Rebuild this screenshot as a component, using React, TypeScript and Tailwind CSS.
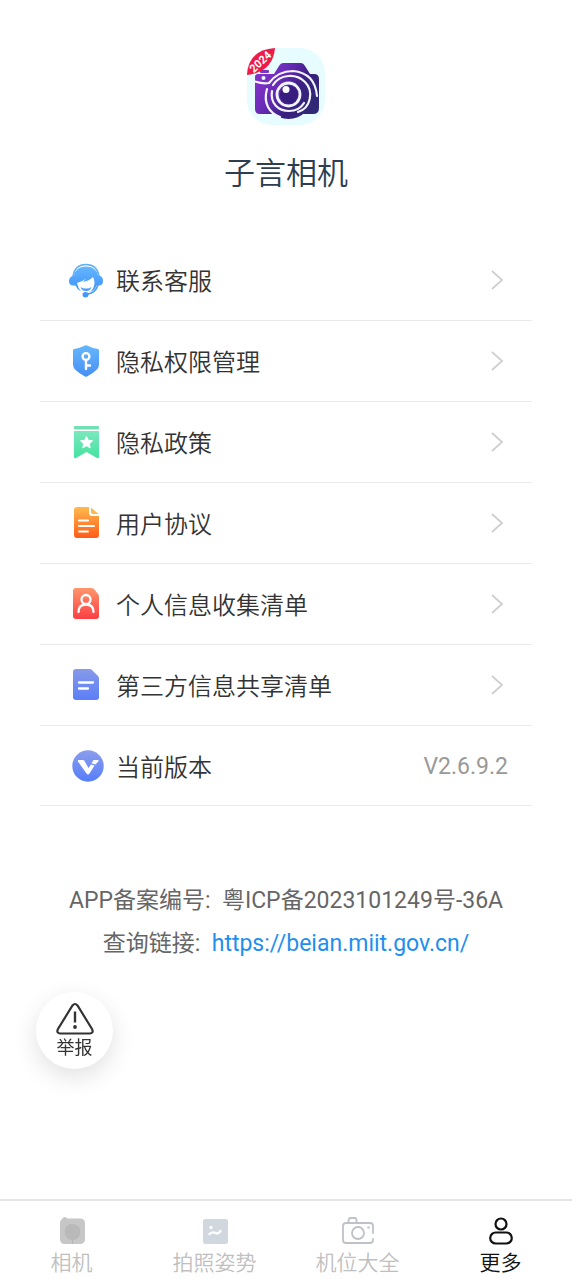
import type { ReactNode } from "react";

function AppLogo() {
  return (
    <svg viewBox="0 0 80 80" className="size-20" role="img" aria-label="子言相机">
      <defs>
        <linearGradient id="logo-body" gradientUnits="userSpaceOnUse" x1="9" y1="24" x2="72" y2="62">
          <stop offset="0" stopColor="#8a35cc" />
          <stop offset="0.35" stopColor="#6a2bb8" />
          <stop offset="0.65" stopColor="#3a2080" />
          <stop offset="1" stopColor="#2f2a72" />
        </linearGradient>
      </defs>
      <rect x="1" y="2" width="78" height="77" rx="25" fill="#e6fcfe" />
      <path d="M12 28h16l5-8q1.500-3 4-3h18q2.500 0 4 3l5 8h4q5 0 5 5v29q0 6-6 6H14q-5 0-5-5V31q0-3 3-3z" fill="url(#logo-body)" />
      <rect x="14" y="24" width="9" height="3" rx="1" fill="#7a35c4" />
      <circle cx="17.500" cy="32" r="2" fill="#e6fcfe" />
      <circle cx="42.500" cy="49" r="24" fill="url(#logo-body)" />
      <g fill="none" stroke="#f1f5ff" strokeLinecap="round">
        <path d="M9 35.500q8 2.500 14 1.500Q32 25 47 25 69 27 71 50" strokeWidth="2.200" />
        <path d="M21 43C17 57 23 67 34 71" strokeWidth="2.200" />
        <path d="M27 39C34 28 50 27 59 36S65 62 52 66" strokeWidth="2.200" />
        <path d="M26 45C24 57 32 65 43 65 50 65 55 62 58 57" strokeWidth="2.200" />
        <circle cx="42.500" cy="48.500" r="11.500" strokeWidth="2.800" />
      </g>
      <circle cx="42.500" cy="48.500" r="8.500" fill="#361d80" />
      <circle cx="40" cy="43.500" r="3.500" fill="#fff" />
      <path d="M1 29Q2 4 29 2Q27 26 1 29z" fill="#f01a48" />
      <text x="14.500" y="19.500" textAnchor="middle" fontSize="11" fontWeight="700" fontFamily="Roboto, sans-serif" fill="#fff" transform="rotate(-43 14.500 16)">2024</text>
    </svg>
  );
}

function ServiceIcon() {
  return (
    <svg viewBox="0 0 36 36" className="size-9" aria-hidden="true">
      <defs>
        <linearGradient id="service" x1="0" y1="0" x2="0" y2="1">
          <stop offset="0" stopColor="#64b6ff" />
          <stop offset="1" stopColor="#3f92f8" />
        </linearGradient>
      </defs>
      <path d="M5 14Q7 2.500 18 2.500T31 14" fill="none" stroke="#60aefb" strokeWidth="1.400" />
      <path d="M18 4.500Q28 4.500 30 13.500q5 0 5 5.500 0 4.500-4.500 4.500h-2Q27 28 22 30q4.500-4 4.500-9 0-3-1.500-6-4 4-10 5l3-3.500q-4 3.500-9 4.500 1 5 4 8.500-4-2-5.500-6H5.500Q1 23.500 1 19T6 13.500Q8 4.500 18 4.500z" fill="url(#service)" />
      <path d="M12.500 25q5.500 3 11 0-1 4-5.500 4t-5.500-4z" fill="url(#service)" />
      <path d="M30 23q-2.500 8.500-12 9.500" fill="none" stroke="#449af9" strokeWidth="1.600" />
      <ellipse cx="17.500" cy="32.800" rx="3" ry="2.700" fill="#4498f8" />
    </svg>
  );
}

function ShieldIcon() {
  return (
    <svg viewBox="0 0 36 36" className="size-9" aria-hidden="true">
      <defs>
        <linearGradient id="shield" x1="0" y1="0" x2="0" y2="1">
          <stop offset="0" stopColor="#65b7fb" />
          <stop offset="1" stopColor="#468ff5" />
        </linearGradient>
      </defs>
      <path d="M17 2.500q1-.5 2 0Q24 5 30 6q1 .2 1 1.500V22q0 5-12 11.500-1 .5-2 0Q5 27 5 22V7.500Q5 6.200 6 6q6-1 11-3.500z" fill="url(#shield)" />
      <g fill="none" stroke="#fff" strokeWidth="2.400">
        <circle cx="18" cy="13.500" r="3.400" />
        <path d="M18 17V26M18 22.500h4" strokeLinecap="round" />
      </g>
    </svg>
  );
}

function BookmarkIcon() {
  return (
    <svg viewBox="0 0 36 36" className="size-9" aria-hidden="true">
      <defs>
        <linearGradient id="bookmark" x1="0" y1="0" x2="0" y2="1">
          <stop offset="0" stopColor="#7be8be" />
          <stop offset="1" stopColor="#43e3a0" />
        </linearGradient>
      </defs>
      <rect x="6" y="2" width="25" height="3.500" rx="1" fill="#72e0b5" />
      <path d="M6 7h25v26q0 2-2 1l-10.500-6L8 34q-2 1-2-1z" fill="url(#bookmark)" />
      <path d="m18.500 12.500 1.800 3.800 4.200.5-3.100 2.900.8 4.200-3.700-2.100-3.700 2.100.8-4.200-3.100-2.900 4.200-.5z" fill="#fff" stroke="#fff" strokeWidth="1" strokeLinejoin="round" />
    </svg>
  );
}

function AgreementIcon() {
  return (
    <svg viewBox="0 0 36 36" className="size-9" aria-hidden="true">
      <defs>
        <linearGradient id="agreement" x1="0" y1="0" x2="0" y2="1">
          <stop offset="0" stopColor="#ffba4e" />
          <stop offset="1" stopColor="#ff5b17" />
        </linearGradient>
      </defs>
      <path d="M9 2h12v6q0 3 3 3h7v19q0 3-3 3H9q-3 0-3-3V5q0-3 3-3z" fill="url(#agreement)" />
      <path d="M23 2.500 30.500 9H25q-2 0-2-2z" fill="#ffb84c" />
      <path d="M11 15.500h9M11 21h15M11 26.500h9" stroke="#fff" strokeWidth="2" strokeLinecap="round" />
    </svg>
  );
}

function PersonalIcon() {
  return (
    <svg viewBox="0 0 36 36" className="size-9" aria-hidden="true">
      <defs>
        <linearGradient id="personal" x1="0" y1="0" x2="0" y2="1">
          <stop offset="0" stopColor="#ff966c" />
          <stop offset="1" stopColor="#fb3f43" />
        </linearGradient>
      </defs>
      <path d="M8 2h15q2 0 3 1l4 5q1 1 1 3v19q0 3-3 3H8q-3 0-3-3V5q0-3 3-3z" fill="url(#personal)" />
      <g fill="none" stroke="#fff" strokeWidth="2.300" strokeLinecap="round">
        <circle cx="18" cy="13.500" r="4.500" />
        <path d="M10.500 26q0-7.500 7.500-7.500t7.500 7.500" />
      </g>
    </svg>
  );
}

function SharedIcon() {
  return (
    <svg viewBox="0 0 36 36" className="size-9" aria-hidden="true">
      <defs>
        <linearGradient id="shared" x1="0" y1="0" x2="0" y2="1">
          <stop offset="0" stopColor="#879ae9" />
          <stop offset="1" stopColor="#5c7ff8" />
        </linearGradient>
      </defs>
      <path d="M8 2h13q2 0 3 1l6 6q1 1 1 3v18q0 3-3 3H8q-3 0-3-3V5q0-3 3-3z" fill="url(#shared)" />
      <path d="M11 15.500h14M11 21.500h9" stroke="#fff" strokeWidth="2.300" strokeLinecap="round" />
    </svg>
  );
}

function VersionIcon() {
  return (
    <svg viewBox="0 0 36 36" className="size-9" aria-hidden="true">
      <defs>
        <linearGradient id="version" x1="0" y1="0" x2="0" y2="1">
          <stop offset="0" stopColor="#8b9eed" />
          <stop offset="1" stopColor="#567df9" />
        </linearGradient>
      </defs>
      <circle cx="20" cy="18" r="15.700" fill="url(#version)" />
      <path d="M10.500 12H15q1 0 1.500 1l4 7 2.500-3.500 3.500 1-5 8q-1.500 2-3 0L10 13.500Q9.500 12 10.500 12z" fill="#fff" />
      <path d="M25.500 12H30q1 0 .4 1.200L27.500 16.500l-4-1.200z" fill="#fff" />
    </svg>
  );
}

function Chevron() {
  return (
    <svg viewBox="0 0 14 22" className="mr-7 h-[22px] w-3.5 shrink-0" aria-hidden="true">
      <path d="m2 2 10 9-10 9" fill="none" stroke="#cfcfcf" strokeWidth="1.800" />
    </svg>
  );
}

const links: { label: string; icon: ReactNode }[] = [
  { label: "联系客服", icon: <ServiceIcon /> },
  { label: "隐私权限管理", icon: <ShieldIcon /> },
  { label: "隐私政策", icon: <BookmarkIcon /> },
  { label: "用户协议", icon: <AgreementIcon /> },
  { label: "个人信息收集清单", icon: <PersonalIcon /> },
  { label: "第三方信息共享清单", icon: <SharedIcon /> },
];

const tabs: { label: string; active?: boolean; icon: ReactNode }[] = [
  {
    label: "相机",
    icon: (
      <svg viewBox="0 0 32 32" className="size-8" aria-hidden="true">
        <path d="M6 4q1-2 3-2 1.500 0 2 1.500h13q5 0 5 5V24q0 5-5 5H9q-5 0-5-5V8q0-3 2-4z" fill="#c7c7c7" />
        <circle cx="16.500" cy="17" r="8" fill="#b9b9b9" />
        <path d="M16.500 25v4" stroke="#b5b5b5" />
      </svg>
    ),
  },
  {
    label: "拍照姿势",
    icon: (
      <svg viewBox="0 0 32 32" className="size-8" aria-hidden="true">
        <rect x="4" y="4" width="25" height="25" rx="2.500" fill="#d0d7df" />
        <circle cx="12" cy="12.500" r="1.700" fill="#fff" />
        <path d="M10.500 19q3.500-2.500 6-1t5-2" fill="none" stroke="#fff" strokeWidth="2.300" strokeLinecap="round" strokeLinejoin="round" />
      </svg>
    ),
  },
  {
    label: "机位大全",
    icon: (
      <svg viewBox="0 0 32 32" className="size-8" aria-hidden="true">
        <g fill="none" stroke="#bfc1c9" strokeWidth="1.800" strokeLinecap="round">
          <path d="M31 18V11q0-3-3-3H4q-3 0-3 3v14q0 3 3 3h24q3 0 3-3v-1M6 8l1-4q.2-1 1-1h5q1 0 1.200 1l.8 4" />
          <circle cx="16" cy="18" r="6" />
          <path d="M26 12.500h1" />
        </g>
      </svg>
    ),
  },
  {
    label: "更多",
    active: true,
    icon: (
      <svg viewBox="0 0 32 32" className="size-8" aria-hidden="true">
        <g fill="none" stroke="#111" strokeWidth="2.200">
          <circle cx="16" cy="9" r="5.500" />
          <rect x="5.200" y="17.500" width="21.600" height="11" rx="5.500" />
        </g>
      </svg>
    ),
  },
];

export default function App() {
  return (
    <div className="flex min-h-screen flex-col bg-white font-['Roboto','Noto_Sans_CJK_SC',sans-serif] text-[#333]">
      <header className="flex flex-col items-center gap-[26px] pt-[46px]">
        <AppLogo />
        <h1 className="text-[31px] leading-11 font-[350] text-[#2c3e50]">子言相机</h1>
      </header>

      <main className="flex-1 px-10 pt-11 pb-28">
        <ul>
          {links.map((item) => (
            <li key={item.label} className="border-b border-[#eaeaea]">
              <a href="#" className="flex h-20 items-center gap-3 pl-7">
                {item.icon}
                <span className="flex-1 pt-1 text-2xl font-[350]">{item.label}</span>
                <Chevron />
              </a>
            </li>
          ))}
          <li className="flex h-20 items-center gap-3 border-b border-[#eaeaea] pr-6 pl-7">
            <VersionIcon />
            <span className="flex-1 pt-1 text-2xl font-[350]">当前版本</span>
            <span className="pt-1 text-[23px] text-[#999]">V2.6.9.2</span>
          </li>
        </ul>

        <div className="mt-[73px] text-center text-[23px] leading-[43px] text-[#666]">
          <p>APP备案编号:&nbsp; 粤ICP备2023101249号-36A</p>
          <p>
            查询链接:&nbsp;{" "}
            <a href="https://beian.miit.gov.cn/" className="text-[#1e8fee]">
              https://beian.miit.gov.cn/
            </a>
          </p>
        </div>
      </main>

      <button
        type="button"
        className="fixed bottom-[210px] left-9 flex size-[77px] flex-col items-center justify-center rounded-full bg-white text-lg leading-6 shadow-[0_8px_24px_rgba(0,0,0,0.12)]"
      >
        <svg viewBox="0 0 38 34" className="h-[34px] w-[38px]" aria-hidden="true">
          <path d="M16.500 3.500q2.500-3 5 0L36 27q2 4-2 4.500H4Q0 31 2 27z" fill="none" stroke="#333" strokeWidth="2.200" />
          <path d="M19 9.500v11" stroke="#333" strokeWidth="2.400" />
          <circle cx="19" cy="25" r="1.900" fill="#333" />
        </svg>
        举报
      </button>

      <nav className="sticky bottom-0 grid grid-cols-4 border-t-2 border-[#e5e5e5] bg-white">
        {tabs.map((tab) => (
          <a
            key={tab.label}
            href="#"
            aria-current={tab.active ? "page" : undefined}
            className={
              tab.active
                ? "flex flex-col items-center pt-3.5 text-[21px] leading-8 font-[350] text-[#111]"
                : "flex flex-col items-center pt-3.5 text-[21px] leading-8 font-[350] text-[#bfbfbf]"
            }
          >
            {tab.icon}
            {tab.label}
          </a>
        ))}
      </nav>
    </div>
  );
}
